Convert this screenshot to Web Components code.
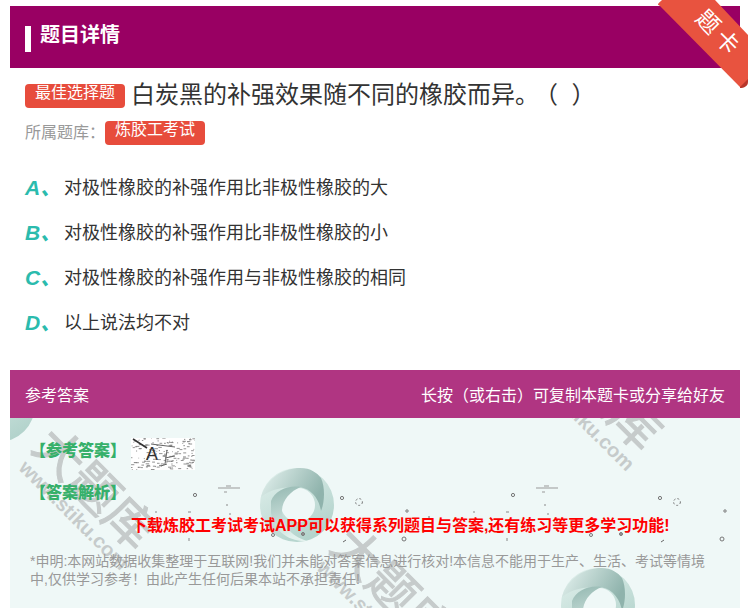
<!DOCTYPE html>
<html lang="zh">
<head>
<meta charset="utf-8">
<title>题目详情</title>
<style>
html,body{margin:0;padding:0;height:608px;overflow:hidden;background:#fff;}
body{font-family:"Liberation Sans","Noto Sans CJK SC",sans-serif;text-spacing-trim:space-all;}
</style>
</head>
<body>
<tiku-page>
    <tiku-head slot="head">题目详情</tiku-head>
    <tiku-question slot="question" kind="最佳选择题" bank="炼胶工考试">白炭黑的补强效果随不同的橡胶而异。<span style="font-family:'Noto Sans CJK TC',sans-serif;margin-left:-5px;letter-spacing:4px">（&nbsp;）</span></tiku-question>
    <tiku-option slot="options" letter="A">对极性橡胶的补强作用比非极性橡胶的大</tiku-option>
    <tiku-option slot="options" letter="B">对极性橡胶的补强作用比非极性橡胶的小</tiku-option>
    <tiku-option slot="options" letter="C">对极性橡胶的补强作用与非极性橡胶的相同</tiku-option>
    <tiku-option slot="options" letter="D">以上说法均不对</tiku-option>
    <tiku-answer slot="answer"></tiku-answer>
</tiku-page>

<script>
class TikuPage extends HTMLElement{
    constructor(){
        super();
        this.attachShadow({mode:"open"});
    }
    connectedCallback(){
        this.shadowRoot.innerHTML = `
        <style>
        :host{display:block;position:relative;width:730px;padding:6px 10px 0;}
        #options{display:flex;flex-direction:column;gap:15px;padding:26px 15px 0;}
        #answer{margin-top:34px;}
        </style>
        <slot name="head"></slot>
        <slot name="question"></slot>
        <div id="options"><slot name="options"></slot></div>
        <div id="answer"><slot name="answer"></slot></div>
        <tiku-ribbon></tiku-ribbon>
        `;
    }
}

class TikuHead extends HTMLElement{
    constructor(){
        super();
        this.attachShadow({mode:"open"});
    }
    connectedCallback(){
        this.shadowRoot.innerHTML = `
        <style>
        :host{display:flex;align-items:center;gap:9px;height:62px;padding-left:15px;background:#990063;color:#fff;font-size:20px;font-weight:bold;}
        i{display:block;width:6px;height:26px;margin-top:3px;background:#fff;}
        span{position:relative;top:-4px;}
        </style>
        <i></i><span><slot></slot></span>
        `;
    }
}

class TikuRibbon extends HTMLElement{
    constructor(){
        super();
        this.attachShadow({mode:"open"});
    }
    connectedCallback(){
        this.shadowRoot.innerHTML = `
        <style>
        :host{display:block;position:absolute;left:650px;top:0;width:100px;height:95px;}
        svg{position:absolute;left:0;top:0;}
        span{position:absolute;color:#fff;font-size:23px;line-height:24px;width:24px;text-align:center;transform:rotate(45deg);}
        </style>
        <svg width="100" height="95" viewBox="0 0 100 95">
            <defs>
                <linearGradient id="sh" x1="0" y1="0" x2="1" y2="-1">
                    <stop offset="0" stop-color="#000" stop-opacity="0"/>
                    <stop offset="1" stop-color="#000" stop-opacity=".13"/>
                </linearGradient>
            </defs>
            <path d="M30 26L90 86V62L60 26Z" fill="url(#sh)"/>
            <path d="M8 5C10 1 13 0 16 0L24 6H13Z" fill="#b8362a"/>
            <path d="M90 76H98V82C98 86 94 88 90 88Z" fill="#b8362a"/>
            <path d="M8 4L12 0H65L98 35V79L90 87Z" fill="#e8533f"/>
        </svg>
        <span style="left:46px;top:10px">题</span>
        <span style="left:65px;top:30px">卡</span>
        `;
    }
}

class TikuQuestion extends HTMLElement{
    constructor(){
        super();
        this.attachShadow({mode:"open"});
    }
    connectedCallback(){
        this.shadowRoot.innerHTML = `
        <style>
        :host{display:block;padding:13px 15px 0;}
        .row{display:flex;align-items:flex-start;}
        .title{gap:6px;color:#333;font-size:24px;line-height:28px;height:40px;white-space:nowrap;}
        .title span:last-child{position:relative;top:-2px;}
        .bank{gap:0;color:#999;font-size:16px;line-height:20px;}
        .tag{display:block;width:100px;height:24px;border-radius:4px;background:#e74c3c;color:#fff;font-size:16px;line-height:18px;text-align:center;}
        .title .tag{margin-top:3px;}
        .bank b{font-weight:normal;width:80px;font-family:"Noto Sans CJK TC",sans-serif;}
        </style>
        <div class="row title"><span class="tag">${this.getAttribute("kind")}</span><span><slot></slot></span></div>
        <div class="row bank"><b>所属题库：</b><span class="tag">${this.getAttribute("bank")}</span></div>
        `;
    }
}

class TikuOption extends HTMLElement{
    constructor(){
        super();
        this.attachShadow({mode:"open"});
    }
    connectedCallback(){
        this.shadowRoot.innerHTML = `
        <style>
        :host{display:flex;align-items:center;height:30px;color:#333;font-size:18px;}
        b{width:39px;margin-top:-1px;color:#2bbbad;font-size:21px;font-style:italic;white-space:nowrap;}
        </style>
        <b>${this.getAttribute("letter")}、</b><span><slot></slot></span>
        `;
    }
}

// fondo con la marca de agua que se repite en el panel de respuesta
class TikuWatermark extends HTMLElement{
    constructor(){
        super();
        this.attachShadow({mode:"open"});
    }
    logo(x,y){
        return `<svg class="logo" style="left:${x-38}px;top:${y-38}px" width="76" height="76" viewBox="-38 -38 76 76">
            <path fill-rule="evenodd" d="M0-37A37 37 0 1 1 0 37A37 37 0 1 1 0-37ZM1-17A17 17 0 1 0 1 17A17 17 0 1 0 1-17Z" fill="url(#base)"/>
            <path d="M-36-8C-30-28-12-37 3-37C14-37 20-32 24-27C28-18 28-4 24 6C22-8 12-18 0-18C-14-18-26-16-36-8Z" fill="url(#top)"/>
            <path d="M-26-4C-22-14-10-20 4-18C-7-14-15-4-15 6C-14 20-8 30 10 36C-10 37-24 24-26 8Z" fill="url(#low)"/>
        </svg>`;
    }
    mark(x,y){
        // x,y es el centro del caracter del medio
        return `<span class="wm" style="left:${x}px;top:${y}px">大题库</span>
        <span class="url" style="left:${x-20}px;top:${y+26}px">www.stiku.com</span>`;
    }
    specks(x,y){
        return `<svg class="specks" style="left:${x}px;top:${y}px" width="170" height="80" viewBox="0 0 170 80" fill="none" stroke="#777" stroke-width="1">
            <circle cx="5" cy="15" r="1.6"/><circle cx="152" cy="18" r="1.6"/>
            <circle cx="169" cy="22" r="3.4" stroke-dasharray="2 2"/>
            <path d="M28 8H50M36 6H41M34 12H37" stroke="#999"/>
            <path d="M37 24v2M-35 32h2M-2 32h3M40 33v2M-1 58v3" stroke="#888"/>
            <circle cx="217" cy="31" r="1.2"/><circle cx="214" cy="59" r="2"/>
            <path d="M153 62l3-2M239 36v2" stroke="#666"/>
            <circle cx="83" cy="55" r="1.5"/><circle cx="113" cy="54" r="1.5" fill="#999"/>
        </svg>`;
    }
    connectedCallback(){
        this.shadowRoot.innerHTML = `
        <style>
        :host{display:block;position:absolute;left:0;top:0;right:0;bottom:0;overflow:hidden;}
        .logo,.specks{position:absolute;overflow:visible;}
        span{position:absolute;white-space:nowrap;color:#c6cbcb;transform:translate(-50%,-50%) rotate(45deg);}
        .wm{font-size:49px;line-height:49px;-webkit-text-stroke:1px #c6cbcb;}
        .url{font-size:20px;line-height:22px;font-weight:bold;}
        </style>
        <svg width="0" height="0" style="position:absolute">
            <defs>
                <linearGradient id="base" x1="0" y1="0" x2="0.6" y2="1">
                    <stop offset="0" stop-color="#e2f1ed"/>
                    <stop offset="1" stop-color="#b3d3cc"/>
                </linearGradient>
                <linearGradient id="top" x1="0" y1="0" x2="1" y2="0.4">
                    <stop offset="0" stop-color="#e6f3f0"/>
                    <stop offset="1" stop-color="#8fb3ac"/>
                </linearGradient>
                <linearGradient id="low" x1="0" y1="0" x2="0.2" y2="1">
                    <stop offset="0" stop-color="#94b8b1"/>
                    <stop offset="1" stop-color="#e2f1ed"/>
                </linearGradient>
            </defs>
        </svg>
        ${this.logo(-12,-13)}${this.logo(287,87)}${this.logo(588,187)}
        ${this.mark(84,71)}${this.mark(382,171)}${this.mark(590,-28)}
        ${this.specks(180,62)}${this.specks(498,62)}
        `;
    }
}

// imagen de la respuesta, fondo blanco con ruido
class TikuAnswerImage extends HTMLElement{
    constructor(){
        super();
        this.attachShadow({mode:"open"});
    }
    connectedCallback(){
        let seed = 7;
        const rnd = () => (seed = (seed * 16807) % 2147483647) / 2147483647;
        let noise = "";
        for(let i = 0; i < 170; i++){
            const x = (rnd() * 64).toFixed(1), y = (rnd() * 32).toFixed(1), w = (rnd() * 3 + 0.6).toFixed(1);
            noise += `M${x} ${y}h${w}`;
        }
        this.shadowRoot.innerHTML = `
        <style>
        :host{display:block;position:relative;width:64px;height:32px;background:#fff;}
        svg{position:absolute;left:0;top:0;}
        span{position:absolute;left:15px;top:3px;color:#333;font-size:18px;font-weight:normal;line-height:26px;}
        </style>
        <svg width="64" height="32" viewBox="0 0 64 32" fill="none">
            <path d="${noise}" stroke="#777" stroke-width=".8"/>
            <path d="M2 1L16 10" stroke="#333" stroke-width="1.6"/>
            <path d="M20 6L44 9M36 12L34 26M34 20L44 18M30 28L36 26" stroke="#666"/>
        </svg>
        <span>A</span>
        `;
    }
}

class TikuAnswer extends HTMLElement{
    constructor(){
        super();
        this.attachShadow({mode:"open"});
    }
    connectedCallback(){
        this.shadowRoot.innerHTML = `
        <style>
        :host{display:block;font-size:16px;}
        header{display:flex;align-items:center;justify-content:space-between;height:48px;padding:0 15px;background:#b03582;color:#fff;position:relative;z-index:2;}
        #panel{position:relative;height:190px;background:#eff8f7;overflow:hidden;}
        #body{position:relative;display:flex;flex-direction:column;padding:20px 20px 0;}
        .line{display:flex;align-items:flex-start;height:42px;color:#36b06a;font-weight:bold;}
        .line b{line-height:24px;margin-top:1px;width:101px;}
        .promo{margin:-7px 0 0;height:38px;padding-left:101px;color:#f00;font-weight:bold;line-height:22px;white-space:nowrap;}
        p{margin:0;color:#999;font-size:14px;line-height:17px;}
        .tc{font-family:"Noto Sans CJK TC",sans-serif;}
        </style>
        <header><span>参考答案</span><span>长按<span class="tc">（</span>或右击<span class="tc">）</span>可复制本题卡或分享给好友</span></header>
        <div id="panel">
            <tiku-watermark></tiku-watermark>
            <div id="body">
                <div class="line"><b>【参考答案】</b><tiku-answer-image></tiku-answer-image></div>
                <div class="line"><b>【答案解析】</b></div>
                <div class="promo">下载炼胶工考试考试APP可以获得系列题目与答案,还有练习等更多学习功能!</div>
                <p>*申明:本网站数据收集整理于互联网!我们并未能对答案信息进行核对!本信息不能用于生产、生活、考试等情境中,仅供学习参考<span class="tc">！</span>由此产生任何后果本站不承担责任!</p>
            </div>
        </div>
        `;
    }
}

customElements.define("tiku-page", TikuPage);
customElements.define("tiku-head", TikuHead);
customElements.define("tiku-ribbon", TikuRibbon);
customElements.define("tiku-question", TikuQuestion);
customElements.define("tiku-option", TikuOption);
customElements.define("tiku-watermark", TikuWatermark);
customElements.define("tiku-answer-image", TikuAnswerImage);
customElements.define("tiku-answer", TikuAnswer);
</script>
</body>
</html>
